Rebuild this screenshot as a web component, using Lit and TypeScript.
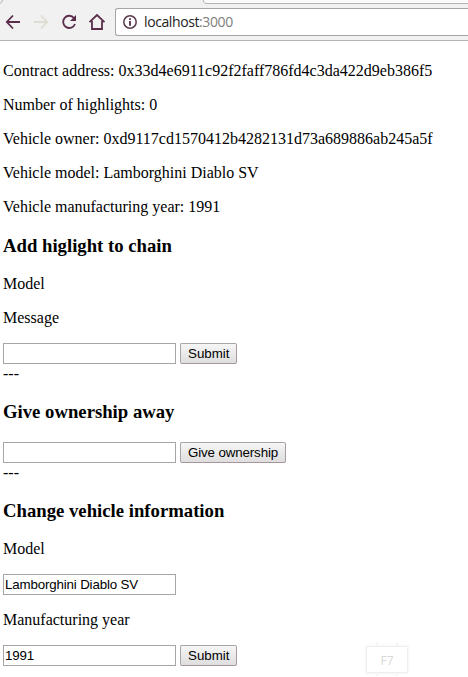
import { LitElement, html, css } from "lit";
import { customElement, property } from "lit/decorators.js";

@customElement("browser-bar")
class BrowserBar extends LitElement {
  static styles = css`
    :host { display: block; }
    .chrome {
      position: relative; box-sizing: border-box; height: 41px; padding: 8px 0 0 0;
      background: #f1f1f1; border-bottom: 1px solid #b3b3b3;
      display: flex; align-items: flex-start;
    }
    .tabs { position: absolute; left: 0; top: 0; width: 468px; height: 4px; }
    .icons { flex: none; width: 115px; height: 28px; display: block; }
    .address {
      flex: 1; box-sizing: border-box; height: 28px; background: #fff;
      border: 1px solid #a5a5a5; border-right: 0; border-radius: 3px 0 0 3px;
      display: flex; align-items: center; padding-left: 6px;
    }
    .info { width: 16px; height: 16px; display: block; }
    .url { font: 14px/20px "Open Sans", sans-serif; letter-spacing: -0.4px; margin-left: 6px; color: #222; white-space: pre; }
    .port { color: #80807c; }
  `;
  render() {
    return html`
      <div class="chrome">
        <svg class="tabs" viewBox="0 0 468 4">
          <path d="M203 0L205 3H468V0Z" fill="#fafafa" />
          <path d="M203 0Q204 3.5 206 3.5H468M0 3.5Q2 2.5 2.5 0" fill="none" stroke="#b2b2b2" />
        </svg>
        <svg class="icons" viewBox="0 8 115 28" fill="none" stroke="#5a2d4b" stroke-width="1.8">
          <path d="M20 22H7.5M13 15.5L6.8 22L13 28.5" />
          <path d="M34 22H46.5M41 15.5L47.2 22L41 28.5" stroke="#deddd2" />
          <path d="M74 18A6.1 6.1 0 1 0 75 24" />
          <path d="M76 15V21H70Z" fill="#5a2d4b" stroke="none" />
          <path d="M89.5 22.2L97 15L104.500 22.2M92 21V29H102V21" />
        </svg>
        <div class="address">
          <svg class="info" viewBox="0 0 16 16">
            <circle cx="8" cy="8" r="6.2" fill="none" stroke="#5a3a4c" stroke-width="1.5" />
            <path d="M7.100 7H8.900V11.700H7.100ZM7.100 4.300H8.900V6H7.100Z" fill="#5a2d4b" />
          </svg>
          <span class="url">localhost<span class="port">:3000</span></span>
        </div>
      </div>
    `;
  }
}

@customElement("field-row")
class FieldRow extends LitElement {
  @property() value = "";
  @property() action = "";
  static styles = css`
    :host { display: block; }
    .row { display: flex; gap: 4px; height: 21px; }
    .field, .button {
      box-sizing: border-box; height: 21px; margin: 0; border: 1px solid #a6a6a6;
      font: 13.333px "Liberation Sans", Arial, sans-serif; color: #000; outline: 0;
    }
    .field { width: 173px; padding: 1px; background: #fff; border-radius: 0; letter-spacing: -0.16px; }
    .button {
      padding: 0 7px; border-radius: 2px; white-space: nowrap; line-height: 19px;
      border-color: #aaa6a8 #a89ba0 #a8959b #aaa6a8;
      background: linear-gradient(#f6f6f6, #dedede);
    }
    .long { width: 106px; letter-spacing: -0.13px; }
  `;
  render() {
    return html`<div class="row">
      <input class="field" type="text" .value=${this.value} />
      ${this.action
        ? html`<button class="button ${this.action.length > 8 ? "long" : ""}" type="button">${this.action}</button>`
        : null}
    </div>`;
  }
}

@customElement("app-root")
class AppRoot extends LitElement {
  static styles = css`
    :host { display: block; position: relative; height: 677px; overflow: hidden; background: #fff; }
    .page { padding: 21px 3px 0; font: 16px/18px "Liberation Serif", "Times New Roman", serif; color: #000; }
    .line { margin: 0 0 16px; white-space: nowrap; }
    .heading { margin: 19px 0; font-size: 18.72px; line-height: 21px; font-weight: bold; }
    .divider { height: 17px; padding-top: 1px; }
    .ownership { padding-top: 1px; }
    .gap { margin-bottom: 16px; }
    .key { position: absolute; left: 362px; top: 640px; width: 50px; height: 37px; }
    .label { font: 12px "Open Sans", sans-serif; fill: #d9d9d7; }
  `;

  private facts = [
    ["Contract address", "0x33d4e6911c92f2faff786fd4c3da422d9eb386f5"],
    ["Number of highlights", "0"],
    ["Vehicle owner", "0xd9117cd1570412b4282131d73a689886ab245a5f"],
    ["Vehicle model", "Lamborghini Diablo SV"],
    ["Vehicle manufacturing year", "1991"],
  ];

  render() {
    return html`
      <browser-bar></browser-bar>
      <main class="page">
        ${this.facts.map(([name, value]) => html`<p class="line">${name}: ${value}</p>`)}
        <h3 class="heading">Add higlight to chain</h3>
        <p class="line">Model</p>
        <p class="line">Message</p>
        <field-row action="Submit"></field-row>
        <div class="divider">---</div>
        <h3 class="heading">Give ownership away</h3>
        <field-row class="ownership" action="Give ownership"></field-row>
        <div class="divider">---</div>
        <h3 class="heading">Change vehicle information</h3>
        <p class="line">Model</p>
        <field-row class="gap" value="Lamborghini Diablo SV"></field-row>
        <p class="line">Manufacturing year</p>
        <field-row value="1991" action="Submit"></field-row>
      </main>
      <svg class="key" viewBox="0 0 50 37">
        <path d="M15 2.500V36M35 2.500V36" stroke="#f3f3f3" stroke-width="2" />
        <rect x="4" y="6" width="42" height="27" rx="1.500" fill="none" stroke="#f9f9f9" stroke-width="3" />
        <rect x="4.500" y="6.500" width="41" height="26" rx="1" fill="#fff" stroke="#eeeeee" stroke-width="1" />
        <text class="label" x="25" y="25" text-anchor="middle">F7</text>
      </svg>
    `;
  }
}
